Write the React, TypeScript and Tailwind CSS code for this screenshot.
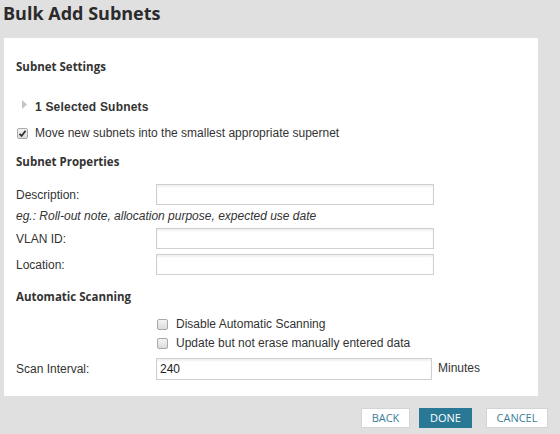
import React from 'react'

const SANS = "font-['Liberation_Sans',Arial,sans-serif]"
const HEAD = "font-['Open_Sans','Noto_Sans',sans-serif]"

function Box({ checked = false }: { checked?: boolean }) {
  return (
    <span className="flex h-[11px] w-[11px] shrink-0 items-center justify-center rounded-[2px] border border-[#a9a9a9] bg-gradient-to-b from-[#f4f4f4] to-[#dcdcdc]">
      {checked && (
        <svg width="9" height="9" viewBox="0 0 9 9">
          <path d="M1.5 4.8 L3.6 6.9 L7.6 1.8" fill="none" stroke="#333" strokeWidth="1.8" />
        </svg>
      )}
    </span>
  )
}

function Heading({ children, className = '' }: { children: React.ReactNode; className?: string }) {
  return (
    <div className={`flex h-[16px] items-center text-[11.5px] font-bold text-[#333] ${HEAD} ${className}`}>
      {children}
    </div>
  )
}

function FieldRow({ label, className = '' }: { label: string; className?: string }) {
  return (
    <div className={`flex h-[21px] items-center ${className}`}>
      <span className="w-[140px] text-[12px] text-[#333]">{label}</span>
      <input className="h-[21px] w-[278px] border border-[#cfcfcf] bg-white shadow-[inset_0_2px_2px_rgba(0,0,0,0.06)] outline-none" />
    </div>
  )
}

export default function App() {
  return (
    <div className={`h-[434px] w-[560px] overflow-hidden bg-[#e0e0e1] ${SANS}`}>
      <h1 className={`h-[38px] pl-[3px] pt-[1px] text-[18px] font-bold leading-[24px] text-[#2b2b2b] ${HEAD}`}>
        Bulk Add Subnets
      </h1>

      <div className="ml-[4px] h-[358px] w-[534px] bg-white pl-[12px] pt-[21px]">
        <Heading>Subnet Settings</Heading>

        <div className="mt-[24px] flex h-[16px] items-center">
          <svg width="5" height="9" viewBox="0 0 5 9" className="ml-[6px] mt-[-6px]">
            <path d="M0 0 L5 4.5 L0 9 Z" fill="#c4c4c4" />
          </svg>
          <span className="ml-[8px] text-[12px] font-bold tracking-[0.2px] text-[#333]">1 Selected Subnets</span>
        </div>

        <label className="mt-[10px] flex h-[16px] items-center">
          <span className="ml-[1px]">
            <Box checked />
          </span>
          <span className="ml-[7px] text-[12px] text-[#333]">Move new subnets into the smallest appropriate supernet</span>
        </label>

        <Heading className="mt-[13px]">Subnet Properties</Heading>

        <FieldRow label="Description:" className="mt-[14px]" />
        <div className="mt-[3px] flex h-[16px] items-center text-[12px] italic text-[#333]">
          eg.: Roll-out note, allocation purpose, expected use date
        </div>
        <FieldRow label="VLAN ID:" className="mt-[4px]" />
        <FieldRow label="Location:" className="mt-[5px]" />

        <Heading className="mt-[14px]">Automatic Scanning</Heading>

        <label className="mt-[10px] flex h-[18px] items-center pl-[140px]">
          <span className="ml-[1px]">
            <Box />
          </span>
          <span className="ml-[8px] text-[12px] text-[#333]">Disable Automatic Scanning</span>
        </label>
        <label className="mt-[1px] flex h-[18px] items-center pl-[140px]">
          <span className="ml-[1px]">
            <Box />
          </span>
          <span className="ml-[8px] text-[12px] text-[#333]">Update but not erase manually entered data</span>
        </label>

        <div className="mt-[6px] flex h-[22px] items-center">
          <span className="w-[140px] text-[12px] text-[#333]">Scan Interval:</span>
          <input
            defaultValue="240"
            className="h-[22px] w-[276px] border border-[#cfcfcf] bg-white pl-[3px] text-[12px] text-[#222] shadow-[inset_0_2px_2px_rgba(0,0,0,0.06)] outline-none"
          />
          <span className="ml-[6px] mt-[-2px] text-[12px] text-[#333]">Minutes</span>
        </div>
      </div>

      <div className={`mt-[12px] flex h-[20px] justify-end pr-[12px] text-[11px] ${HEAD}`}>
        <button className="flex h-[20px] w-[49px] items-center justify-center border border-[#d4d4d4] bg-white text-[#3a7d9a]">
          BACK
        </button>
        <button className="ml-[9px] flex h-[20px] w-[53px] items-center justify-center bg-[#297996] text-white">
          DONE
        </button>
        <button className="ml-[14px] flex h-[20px] w-[62px] items-center justify-center border border-[#d4d4d4] bg-white text-[#3a7d9a]">
          CANCEL
        </button>
      </div>
    </div>
  )
}
